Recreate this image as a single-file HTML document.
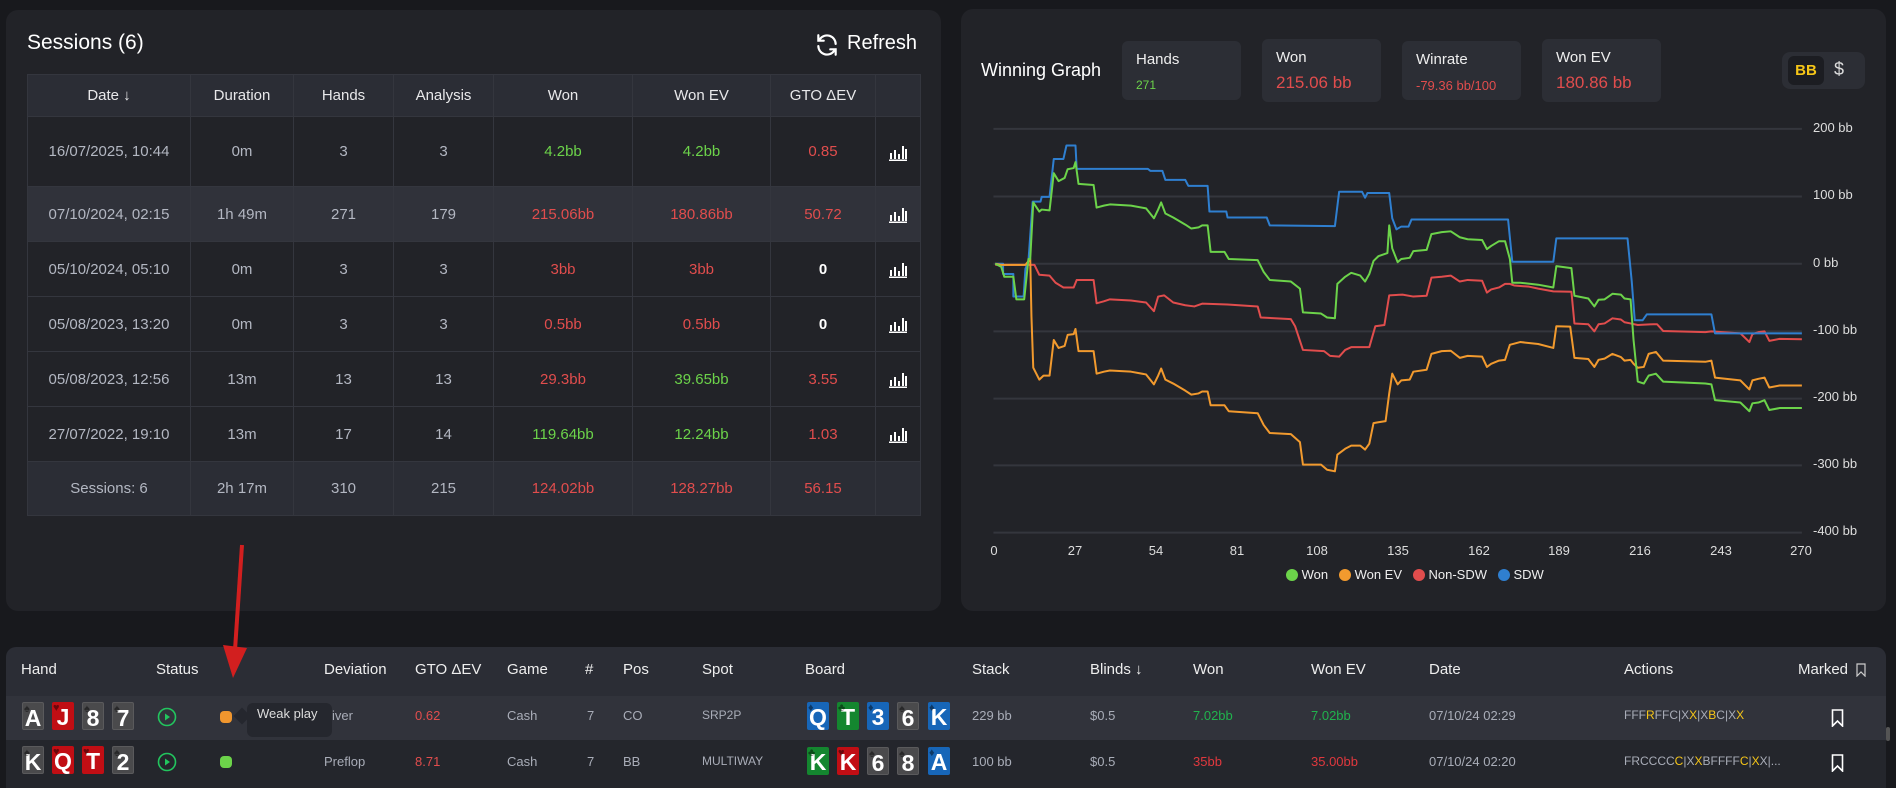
<!DOCTYPE html>
<html><head><meta charset="utf-8"><style>
*{margin:0;padding:0;box-sizing:border-box}
body{width:1896px;height:788px;background:#18191d;font-family:"Liberation Sans",sans-serif;color:#fff;position:relative;overflow:hidden}
.abs{position:absolute}
.panel{position:absolute;background:#222328;border-radius:12px}
table.s{position:absolute;left:27px;top:74px;width:893px;border-collapse:collapse;table-layout:fixed;font-size:15px}
table.s td{border:1px solid #34363e;text-align:center;color:#b3b7c2;padding:0;white-space:nowrap}
table.s tr.hr0 td{background:#2b2d35;color:#e8e8ea;height:42px}
table.s tr.hl td{background:#30323a}
table.s tr.f td{background:#2b2d35;height:54px}
table.s td.g{color:#6cd34a}table.s td.r{color:#e14d4d}table.s td.w{color:#fff;font-weight:bold}
.stat{position:absolute;background:#2c2e35;border-radius:6px;width:119px}
.stat .l{position:absolute;left:14px;top:10px;font-size:15px;color:#eee}
.stat .v{position:absolute;left:14px;top:34px;font-size:17px;color:#e14d4d}
.yl{position:absolute;left:1813px;font-size:13px;color:#ddd}
.xl{position:absolute;top:543px;font-size:13px;color:#ddd;width:40px;text-align:center;margin-left:-20px}
.hd{position:absolute;top:661px;font-size:15px;color:#eee}
.c{position:absolute;top:12px;font-size:13px;color:#a9adb8}
.card{position:absolute;width:22px;height:28px;border-radius:2px;font-weight:bold;font-size:23px;color:#fff;text-align:center;line-height:30px}
.card:before{position:absolute;left:1px;top:-9px;font-size:11px;color:rgba(0,0,0,.45)}
.ks{background:#4a4a4c;border:1px solid #5a5a5c}.ks:before{content:"♠"}
.ht{background:#c10e14}.ht:before{content:"♥"}
.dm{background:#1766b8}.dm:before{content:"♦"}
.cb{background:#14862f}.cb:before{content:"♣"}
.row{position:absolute;left:6px;width:1880px}
.ch{display:inline-block;width:20px;height:18px;vertical-align:middle}
</style></head><body>

<div class="panel" style="left:6px;top:10px;width:935px;height:601px"></div>
<div class="abs" style="left:27px;top:31px;font-size:21px;color:#fff">Sessions (6)</div>
<svg class="abs" style="left:814px;top:32px" width="26" height="26" viewBox="0 0 24 24" fill="none" stroke="#fff" stroke-width="2" stroke-linecap="round"><path d="M20 11A8 8 0 0 0 5.5 6.5L4 8M4 3v5h5"/><path d="M4 13a8 8 0 0 0 14.5 4.5L20 16M20 21v-5h-5"/></svg>
<div class="abs" style="left:847px;top:32px;font-size:20px">Refresh</div>

<table class="s">
<colgroup><col style="width:163px"><col style="width:103px"><col style="width:100px"><col style="width:100px"><col style="width:139px"><col style="width:138px"><col style="width:105px"><col style="width:45px"></colgroup>
<tr class="hr0"><td>Date ↓</td><td>Duration</td><td>Hands</td><td>Analysis</td><td>Won</td><td>Won EV</td><td>GTO ΔEV</td><td></td></tr>
<tr style="height:70px"><td>16/07/2025, 10:44</td><td>0m</td><td>3</td><td>3</td><td class="g">4.2bb</td><td class="g">4.2bb</td><td class="r">0.85</td><td><svg class="ch" viewBox="0 0 20 18"><path d="M3 16V10M7 16V7M11 16V11M15 16V3M18 16V6M1 17.5h18" stroke="#fff" stroke-width="2"/></svg></td></tr>
<tr class="hl" style="height:55px"><td>07/10/2024, 02:15</td><td>1h 49m</td><td>271</td><td>179</td><td class="r">215.06bb</td><td class="r">180.86bb</td><td class="r">50.72</td><td><svg class="ch" viewBox="0 0 20 18"><path d="M3 16V10M7 16V7M11 16V11M15 16V3M18 16V6M1 17.5h18" stroke="#fff" stroke-width="2"/></svg></td></tr>
<tr style="height:55px"><td>05/10/2024, 05:10</td><td>0m</td><td>3</td><td>3</td><td class="r">3bb</td><td class="r">3bb</td><td class="w">0</td><td><svg class="ch" viewBox="0 0 20 18"><path d="M3 16V10M7 16V7M11 16V11M15 16V3M18 16V6M1 17.5h18" stroke="#fff" stroke-width="2"/></svg></td></tr>
<tr style="height:55px"><td>05/08/2023, 13:20</td><td>0m</td><td>3</td><td>3</td><td class="r">0.5bb</td><td class="r">0.5bb</td><td class="w">0</td><td><svg class="ch" viewBox="0 0 20 18"><path d="M3 16V10M7 16V7M11 16V11M15 16V3M18 16V6M1 17.5h18" stroke="#fff" stroke-width="2"/></svg></td></tr>
<tr style="height:55px"><td>05/08/2023, 12:56</td><td>13m</td><td>13</td><td>13</td><td class="r">29.3bb</td><td class="g">39.65bb</td><td class="r">3.55</td><td><svg class="ch" viewBox="0 0 20 18"><path d="M3 16V10M7 16V7M11 16V11M15 16V3M18 16V6M1 17.5h18" stroke="#fff" stroke-width="2"/></svg></td></tr>
<tr style="height:55px"><td>27/07/2022, 19:10</td><td>13m</td><td>17</td><td>14</td><td class="g">119.64bb</td><td class="g">12.24bb</td><td class="r">1.03</td><td><svg class="ch" viewBox="0 0 20 18"><path d="M3 16V10M7 16V7M11 16V11M15 16V3M18 16V6M1 17.5h18" stroke="#fff" stroke-width="2"/></svg></td></tr>
<tr class="f"><td>Sessions: 6</td><td>2h 17m</td><td>310</td><td>215</td><td class="r">124.02bb</td><td class="r">128.27bb</td><td class="r">56.15</td><td></td></tr>
</table>

<div class="panel" style="left:961px;top:9px;width:925px;height:602px"></div>
<div class="abs" style="left:981px;top:60px;font-size:18px">Winning Graph</div>
<div class="stat" style="left:1122px;top:41px;height:59px"><div class="l">Hands</div><div class="v" style="font-size:12px;color:#6cd34a;top:37px">271</div></div>
<div class="stat" style="left:1262px;top:39px;height:63px"><div class="l">Won</div><div class="v">215.06 bb</div></div>
<div class="stat" style="left:1402px;top:41px;height:59px"><div class="l">Winrate</div><div class="v" style="font-size:13px;top:37px">-79.36 bb/100</div></div>
<div class="stat" style="left:1542px;top:39px;height:63px"><div class="l">Won EV</div><div class="v">180.86 bb</div></div>
<div class="abs" style="left:1782px;top:52px;width:83px;height:37px;background:#2c2e35;border-radius:8px"></div>
<div class="abs" style="left:1788px;top:56px;width:36px;height:29px;background:#1c1d22;border-radius:6px;color:#f5c518;font-size:15px;font-weight:bold;text-align:center;line-height:29px">BB</div>
<div class="abs" style="left:1834px;top:59px;font-size:18px;color:#ddd">$</div>

<svg class="abs" style="left:950px;top:0" width="946" height="620" viewBox="0 0 1568 1568" preserveAspectRatio="none" fill="none" stroke-linejoin="round">
<path d="M72 326H1412M72 497H1412M72 667H1412M72 838H1412M72 1008H1412M72 1177H1412M72 1347H1412" stroke="#34363d" stroke-width="2" vector-effect="non-scaling-stroke"/>
<path vector-effect="non-scaling-stroke" stroke="#e14d4d" stroke-width="2" d="M75 670L140 670L148 695L165 697L175 715L188 727L205 727L210 708L238 708L243 767L255 762L265 757L300 760L325 765L338 787L345 750L355 747L370 765L390 772L405 775L418 768L460 770L510 775L515 803L565 807L572 825L585 885L620 888L630 900L645 902L655 885L665 878L695 878L705 825L720 822L728 747L750 745L768 750L790 748L798 702L815 700L830 697L845 712L858 708L882 710L890 740L897 732L910 727L920 718L928 718L935 722L960 725L975 730L1000 737L1030 738L1035 818L1058 820L1068 838L1075 820L1085 818L1098 805L1112 808L1118 815L1128 818L1140 822L1165 820L1172 820L1182 837L1252 840L1262 838L1310 843L1325 865L1330 845L1340 840L1350 838L1358 862L1375 857L1412 858"/>
<path vector-effect="non-scaling-stroke" stroke="#2f7fd0" stroke-width="2" d="M75 667L88 667L88 693L105 693L105 750L122 750L125 680L130 660L137 510L150 510L152 498L165 498L172 402L188 402L193 368L208 368L210 427L328 427L332 432L352 432L357 455L390 455L395 470L427 470L430 535L458 535L460 550L525 550L530 570L638 572L645 485L683 485L688 500L692 488L728 488L733 552L740 580L748 573L760 573L765 555L925 555L932 662L1000 662L1005 603L1123 603L1130 712L1135 810L1148 810L1155 795L1262 795L1268 843L1412 843"/>
<path vector-effect="non-scaling-stroke" stroke="#f29a2e" stroke-width="2" d="M75 667L85 670L125 670L133 655L135 800L138 930L148 960L155 950L165 950L172 860L180 880L190 875L195 847L205 845L208 832L213 888L238 888L243 945L255 940L265 937L300 940L325 947L338 972L345 950L350 932L357 960L370 970L390 988L400 998L412 995L418 990L427 990L432 1025L455 1025L462 1040L510 1045L520 1075L530 1095L565 1098L580 1118L585 1175L615 1175L625 1188L638 1192L642 1150L655 1135L665 1127L680 1127L688 1137L695 1122L702 1070L710 1068L722 1065L728 995L733 945L742 972L748 962L762 960L768 940L790 935L798 895L815 888L830 887L845 905L858 900L882 902L890 928L897 920L910 912L920 910L928 872L945 865L975 870L1000 880L1005 825L1028 826L1035 905L1058 908L1068 928L1075 910L1085 907L1098 895L1112 903L1118 912L1128 910L1133 920L1140 930L1150 928L1158 895L1170 890L1182 912L1252 915L1262 912L1268 955L1310 962L1325 985L1330 962L1340 958L1350 955L1358 980L1375 975L1412 975"/>
<path vector-effect="non-scaling-stroke" stroke="#6cd34a" stroke-width="2" d="M75 667L85 675L90 700L105 700L110 757L123 757L130 655L133 655L138 512L148 535L152 530L165 532L172 438L180 458L190 450L195 428L205 425L208 410L213 465L238 468L243 525L255 520L265 517L300 520L325 527L338 552L345 530L350 512L357 540L370 550L390 568L400 578L412 575L418 570L427 570L432 637L455 637L462 655L510 658L520 688L530 708L565 712L580 730L585 790L615 793L625 803L638 805L642 718L655 700L665 690L680 697L688 712L695 693L702 660L710 648L725 640L728 570L733 628L742 663L748 655L762 652L768 635L790 632L798 592L815 587L830 585L845 600L858 605L882 607L890 630L897 622L910 610L920 610L928 655L932 715L945 715L975 720L1000 727L1005 673L1030 678L1035 748L1058 755L1068 775L1075 758L1085 757L1098 743L1112 745L1118 755L1128 757L1133 860L1140 965L1150 970L1158 950L1170 945L1182 965L1252 970L1262 972L1268 1012L1310 1018L1325 1040L1330 1020L1340 1018L1350 1012L1358 1037L1375 1032L1412 1032"/>
</svg>
<div class="yl" style="top:120px">200 bb</div>
<div class="yl" style="top:187px">100 bb</div>
<div class="yl" style="top:255px">0 bb</div>
<div class="yl" style="top:322px">-100 bb</div>
<div class="yl" style="top:389px">-200 bb</div>
<div class="yl" style="top:456px">-300 bb</div>
<div class="yl" style="top:523px">-400 bb</div>
<div class="xl" style="left:994px">0</div><div class="xl" style="left:1075px">27</div><div class="xl" style="left:1156px">54</div><div class="xl" style="left:1237px">81</div><div class="xl" style="left:1317px">108</div><div class="xl" style="left:1398px">135</div><div class="xl" style="left:1479px">162</div><div class="xl" style="left:1559px">189</div><div class="xl" style="left:1640px">216</div><div class="xl" style="left:1721px">243</div><div class="xl" style="left:1801px">270</div>
<div class="abs" style="top:567px;left:1286px;font-size:13px;color:#eee;white-space:nowrap">
<span style="display:inline-block;width:12px;height:12px;border-radius:50%;background:#6cd34a;vertical-align:-2px"></span> Won &nbsp;&nbsp;<span style="display:inline-block;width:12px;height:12px;border-radius:50%;background:#f29a2e;vertical-align:-2px"></span> Won EV &nbsp;&nbsp;<span style="display:inline-block;width:12px;height:12px;border-radius:50%;background:#e14d4d;vertical-align:-2px"></span> Non-SDW &nbsp;&nbsp;<span style="display:inline-block;width:12px;height:12px;border-radius:50%;background:#2f7fd0;vertical-align:-2px"></span> SDW</div>

<div class="abs" style="left:6px;top:647px;width:1880px;height:141px;background:#2b2d35;border-radius:10px 10px 0 0"></div>
<div class="hd" style="left:21px">Hand</div><div class="hd" style="left:156px">Status</div><div class="hd" style="left:324px">Deviation</div><div class="hd" style="left:415px">GTO ΔEV</div><div class="hd" style="left:507px">Game</div><div class="hd" style="left:585px">#</div><div class="hd" style="left:623px">Pos</div><div class="hd" style="left:702px">Spot</div><div class="hd" style="left:805px">Board</div><div class="hd" style="left:972px">Stack</div><div class="hd" style="left:1090px">Blinds ↓</div><div class="hd" style="left:1193px">Won</div><div class="hd" style="left:1311px">Won EV</div><div class="hd" style="left:1429px">Date</div><div class="hd" style="left:1624px">Actions</div><div class="hd" style="left:1798px">Marked</div>
<svg class="abs" style="left:1856px;top:663px" width="10" height="14" viewBox="0 0 10 14" fill="none" stroke="#ccc" stroke-width="1.2"><path d="M1 1h8v12l-4-4-4 4z"/></svg>

<div class="row" style="top:696px;height:44px;background:#31333b">
<div class="card ks" style="left:16px;top:6px">A</div><div class="card ht" style="left:46px;top:6px">J</div><div class="card ks" style="left:76px;top:6px">8</div><div class="card ks" style="left:106px;top:6px">7</div>
<svg class="abs" style="left:151px;top:11px" width="20" height="20" viewBox="0 0 20 20"><circle cx="10" cy="10" r="8.5" fill="none" stroke="#22c55e" stroke-width="1.6"/><path d="M8 6.5v7l5-3.5z" fill="#22c55e"/></svg>
<div class="abs" style="left:214px;top:15px;width:12px;height:12px;border-radius:4px;background:#f0962e"></div>
<div class="c" style="left:326px">iver</div>
<div class="c" style="left:409px;color:#e14d4d">0.62</div>
<div class="c" style="left:501px">Cash</div><div class="c" style="left:581px">7</div><div class="c" style="left:617px">CO</div><div class="c" style="left:696px;font-size:12px">SRP2P</div>
<div class="card dm" style="left:801px;top:6px">Q</div><div class="card cb" style="left:831px;top:6px">T</div><div class="card dm" style="left:861px;top:6px">3</div><div class="card ks" style="left:891px;top:6px">6</div><div class="card dm" style="left:922px;top:6px">K</div>
<div class="c" style="left:966px">229 bb</div><div class="c" style="left:1084px">$0.5</div>
<div class="c" style="left:1187px;color:#21b34d">7.02bb</div><div class="c" style="left:1305px;color:#21b34d">7.02bb</div>
<div class="c" style="left:1423px">07/10/24 02:29</div>
<div class="c" style="left:1618px;font-size:12px">FFF<span style="color:#f5c518">R</span>FFC|X<span style="color:#f5c518">X</span>|X<span style="color:#f5c518">B</span>C|X<span style="color:#f5c518">X</span></div>
<svg class="abs" style="left:1825px;top:13px" width="13" height="18" viewBox="0 0 13 18" fill="none" stroke="#fff" stroke-width="1.6"><path d="M1.5 1h10v16l-5-5-5 5z"/></svg>
</div>
<div class="abs" style="left:236px;top:710px;width:12px;height:12px;background:#25272e;transform:rotate(45deg)"></div>
<div class="abs" style="left:247px;top:703px;width:85px;height:34px;background:#25272e;border-radius:6px"></div>
<div class="abs" style="left:257px;top:706px;font-size:13px;color:#ddd">Weak play</div>

<div class="row" style="top:740px;height:48px;background:#24262c">
<div class="card ks" style="left:16px;top:6px">K</div><div class="card ht" style="left:46px;top:6px">Q</div><div class="card ht" style="left:76px;top:6px">T</div><div class="card ks" style="left:106px;top:6px">2</div>
<svg class="abs" style="left:151px;top:12px" width="20" height="20" viewBox="0 0 20 20"><circle cx="10" cy="10" r="8.5" fill="none" stroke="#22c55e" stroke-width="1.6"/><path d="M8 6.5v7l5-3.5z" fill="#22c55e"/></svg>
<div class="abs" style="left:214px;top:16px;width:12px;height:12px;border-radius:4px;background:#6cd34a"></div>
<div class="c" style="left:318px;top:14px">Preflop</div>
<div class="c" style="left:409px;top:14px;color:#e14d4d">8.71</div>
<div class="c" style="left:501px;top:14px">Cash</div><div class="c" style="left:581px;top:14px">7</div><div class="c" style="left:617px;top:14px">BB</div><div class="c" style="left:696px;top:14px;font-size:12px">MULTIWAY</div>
<div class="card cb" style="left:801px;top:7px">K</div><div class="card ht" style="left:831px;top:7px">K</div><div class="card ks" style="left:861px;top:7px">6</div><div class="card ks" style="left:891px;top:7px">8</div><div class="card dm" style="left:922px;top:7px">A</div>
<div class="c" style="left:966px;top:14px">100 bb</div><div class="c" style="left:1084px;top:14px">$0.5</div>
<div class="c" style="left:1187px;top:14px;color:#e0383e">35bb</div><div class="c" style="left:1305px;top:14px;color:#e0383e">35.00bb</div>
<div class="c" style="left:1423px;top:14px">07/10/24 02:20</div>
<div class="c" style="left:1618px;top:14px;font-size:12px">FRCCCC<span style="color:#f5c518">C</span>|X<span style="color:#f5c518">X</span>BFFFF<span style="color:#f5c518">C</span>|<span style="color:#f5c518">X</span>X|...</div>
<svg class="abs" style="left:1825px;top:14px" width="13" height="18" viewBox="0 0 13 18" fill="none" stroke="#fff" stroke-width="1.6"><path d="M1.5 1h10v16l-5-5-5 5z"/></svg>
</div>
<div class="abs" style="left:1886px;top:727px;width:4px;height:14px;background:#555;border-radius:2px"></div>

<svg class="abs" style="left:215px;top:540px" width="40" height="145" viewBox="0 0 40 145"><path d="M27 5L20 110" stroke="#d21f1f" stroke-width="4"/><path d="M8 105L32 108L18 138z" fill="#d21f1f"/></svg>
</body></html>
